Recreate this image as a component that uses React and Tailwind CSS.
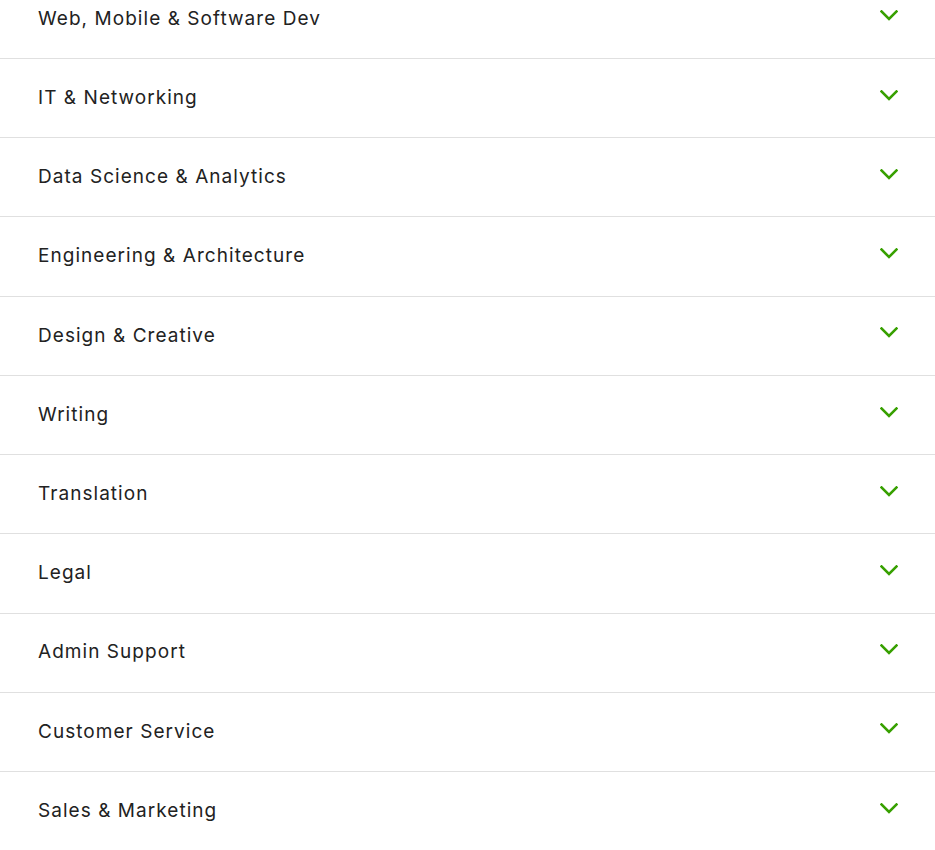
const CATEGORIES = [
  'Web, Mobile & Software Dev',
  'IT & Networking',
  'Data Science & Analytics',
  'Engineering & Architecture',
  'Design & Creative',
  'Writing',
  'Translation',
  'Legal',
  'Admin Support',
  'Customer Service',
  'Sales & Marketing',
]

function Chevron() {
  return (
    <svg width="18" height="11" viewBox="0 0 18 11" fill="none" className="shrink-0">
      <path d="M1.5 1.5 L9 9 L16.5 1.5" stroke="#37a000" strokeWidth="2.6" strokeLinecap="square" />
    </svg>
  )
}

export default function App() {
  return (
    <div className="w-[935px] h-[850px] overflow-hidden bg-white" style={{ fontFamily: 'Inter, sans-serif' }}>
      <div className="mt-[-20.2px]">
        {CATEGORIES.map((name) => (
          <div
            key={name}
            className="h-[79.22px] flex items-center justify-between pl-[38px] pr-[37px] border-b border-[#e0e0e0]"
          >
            <span className="text-[19px] text-[#222] tracking-[0.055em]">{name}</span>
            <div className="mb-[6px]">
              <Chevron />
            </div>
          </div>
        ))}
      </div>
    </div>
  )
}
